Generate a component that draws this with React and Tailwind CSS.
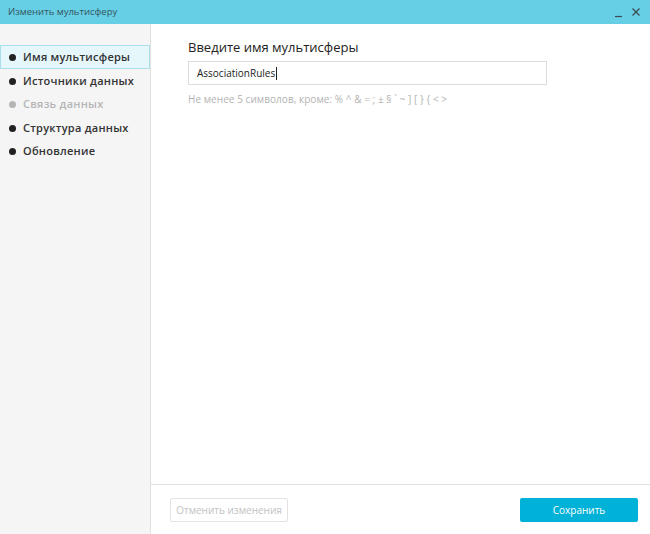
import React from "react";

const items = [
  { label: "Имя мультисферы", active: true },
  { label: "Источники данных" },
  { label: "Связь данных", disabled: true },
  { label: "Структура данных" },
  { label: "Обновление" },
];

export default function App() {
  return (
    <div
      className="w-[650px] h-[534px] flex flex-col bg-white overflow-hidden"
      style={{ fontFamily: '"Open Sans", "Noto Sans", sans-serif' }}
    >
      <div className="h-[24px] shrink-0 bg-[#66cfe6] flex items-center justify-between pl-[8px] pr-[9px]">
        <span className="text-[9.5px] text-[#33545c]">Изменить мультисферу</span>
        <div className="flex items-center gap-[8px]">
          <svg width="9" height="9" viewBox="0 0 9 9" className="mt-[3px]">
            <path d="M1 7.5h7" stroke="#3a4a50" strokeWidth="1.2" />
          </svg>
          <svg width="10" height="10" viewBox="0 0 10 10">
            <path d="M1.5 1.5l7 7M8.5 1.5l-7 7" stroke="#3a4a50" strokeWidth="1.2" />
          </svg>
        </div>
      </div>
      <div className="flex flex-1 min-h-0">
        <div className="w-[151px] shrink-0 bg-[#f5f5f5] border-r border-[#e0e0e0] pt-[21px]">
          {items.map((it, i) => (
            <div
              key={i}
              className={
                "h-[24px] flex items-center gap-[7px] text-[11px] font-semibold tracking-[0.25px] " +
                (it.active
                  ? "bg-[#e5f7fb] border border-[#a8dfeb] pl-[8px] "
                  : "pl-[9px] ") +
                (it.disabled ? "text-[#b5b5b5]" : "text-[#333]")
              }
              style={{ marginTop: i <= 1 ? 0 : -0.5 }}
            >
              <span
                className={
                  "w-[7px] h-[7px] rounded-full " +
                  (it.disabled ? "bg-[#b5b5b5]" : "bg-[#222]")
                }
              />
              <span>{it.label}</span>
            </div>
          ))}
        </div>
        <div className="flex-1 flex flex-col min-w-0">
          <div className="flex-1 pl-[37px] pt-[14px]">
            <div className="text-[13px] font-medium text-[#222] leading-[18px]">
              Введите имя мультисферы
            </div>
            <div className="mt-[5px] w-[359px] h-[24px] border border-[#dcdcdc] flex items-center pl-[8px] text-[10px] font-medium text-[#222]">
              AssociationRules
              <span className="w-[1px] h-[13px] bg-[#222] ml-[1px]" />
            </div>
            <div className="mt-[7px] text-[10px] text-[#b3b3b3] tracking-[0.05px]">
              Не менее 5 символов, кроме: % ^ &amp; = ; ± § ` ~ ] [ } {"{"} &lt; &gt;
            </div>
          </div>
          <div className="h-[50px] shrink-0 border-t border-[#e0e0e0] flex items-start justify-between pl-[19px] pr-[12px] pt-[13px]">
            <button className="w-[118px] h-[24px] border border-[#e3e3e3] rounded-[2px] text-[10px] whitespace-nowrap text-[#c2c2c2] bg-white">
              Отменить изменения
            </button>
            <button className="w-[118px] h-[24px] rounded-[2px] text-[10px] whitespace-nowrap text-white bg-[#00b1d8]">
              Сохранить
            </button>
          </div>
        </div>
      </div>
    </div>
  );
}
